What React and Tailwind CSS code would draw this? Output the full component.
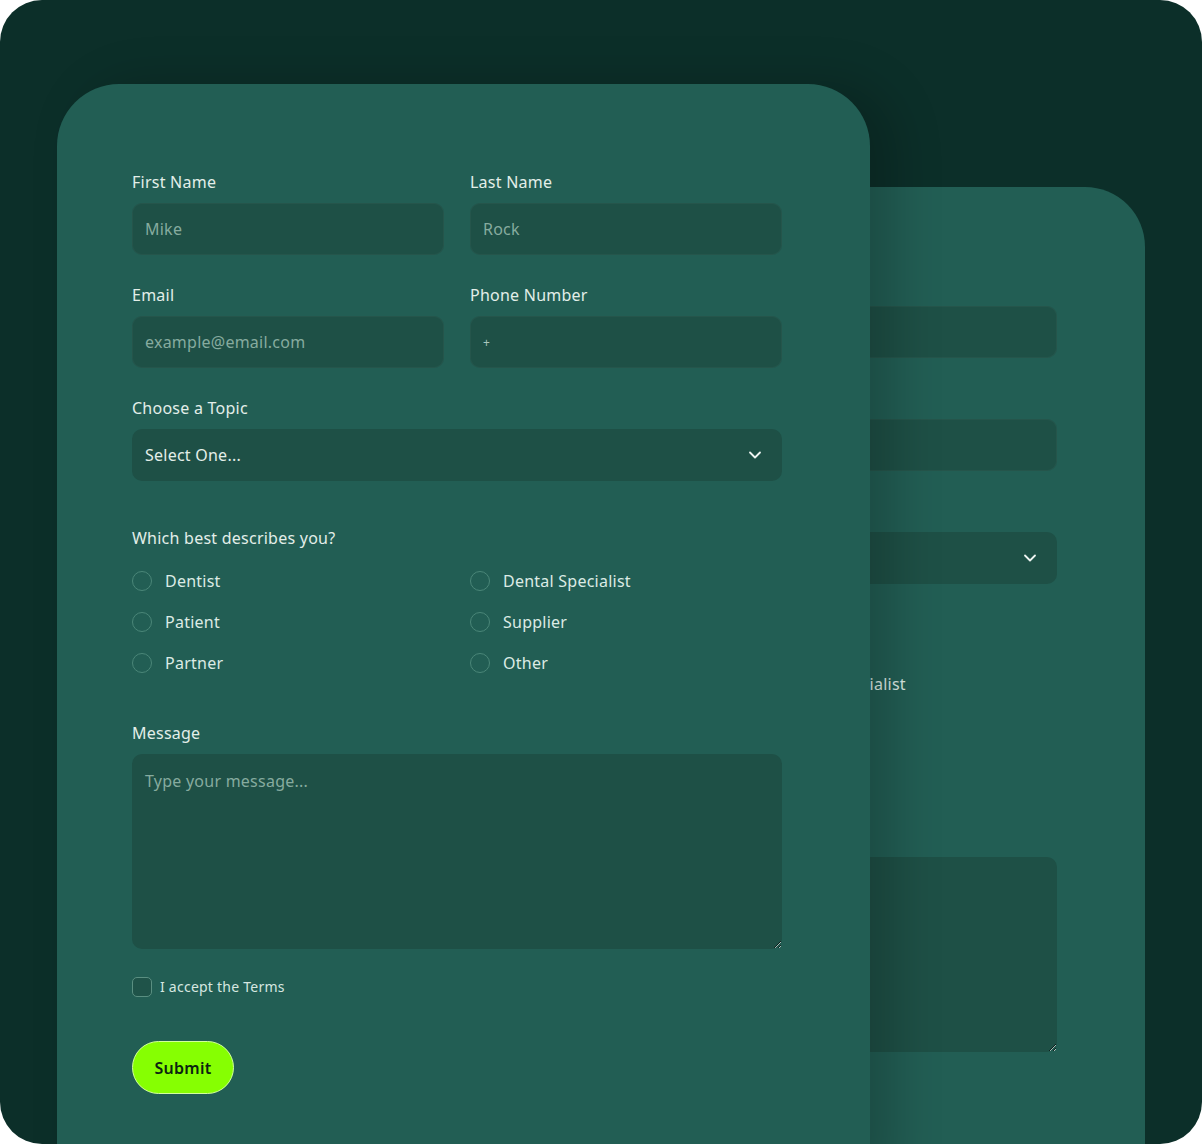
import { ChevronDown } from 'lucide-react'

const roles = ['Dentist', 'Dental Specialist', 'Patient', 'Supplier', 'Partner', 'Other']

function Field({ label, placeholder, small }) {
  return (
    <div className="flex flex-col gap-[9px]">
      <label className="text-base leading-6 text-[#e3eee9]">{label}</label>
      <input
        placeholder={placeholder}
        className={`h-[52px] w-full rounded-[10px] bg-[#1e5046] px-[13px] text-[#e3eee9] outline-none shadow-[inset_0_0_0_1px_rgba(255,255,255,0.03)] ${small ? 'text-xs placeholder:text-[#a9c7bd]' : 'text-base placeholder:text-[#86ab9f]'}`}
      />
    </div>
  )
}

function ContactForm() {
  return (
    <form className="flex w-[650px] flex-col tracking-[0.015em]" onSubmit={(e) => e.preventDefault()}>
      <div className="grid grid-cols-2 gap-x-[26px] gap-y-[28px]">
        <Field label="First Name" placeholder="Mike" />
        <Field label="Last Name" placeholder="Rock" />
        <Field label="Email" placeholder="example@email.com" />
        <Field label="Phone Number" placeholder="+" small />
      </div>

      <div className="mt-[28px] flex flex-col gap-[9px]">
        <label className="text-base leading-6 text-[#e3eee9]">Choose a Topic</label>
        <button
          type="button"
          className="flex h-[52px] w-full items-center justify-between rounded-[10px] bg-[#1e5046] pl-[13px] pr-[17px] text-base text-[#e3eee9]"
        >
          <span>Select One...</span>
          <ChevronDown className="h-5 w-5 text-[#eef5f2]" strokeWidth={2.2} />
        </button>
      </div>

      <p className="mt-[45px] text-base leading-6 text-[#e3eee9]">Which best describes you?</p>
      <div className="mt-[21px] grid grid-cols-2 gap-x-[26px] gap-y-[21px]">
        {roles.map((r) => (
          <label key={r} className="flex h-5 items-center gap-[13px] text-base text-[#dcebe5]">
            <span className="h-5 w-5 shrink-0 rounded-full border border-[#4a8678]" />
            {r}
          </label>
        ))}
      </div>

      <div className="mt-[48px] flex flex-col gap-[9px]">
        <label className="text-base leading-6 text-[#e3eee9]">Message</label>
        <textarea
          placeholder="Type your message..."
          className="h-[195px] w-full rounded-[10px] bg-[#1e5046] px-[13px] py-[15px] text-base text-[#e3eee9] outline-none placeholder:text-[#86ab9f]"
        />
      </div>

      <label className="mt-[28px] flex items-center gap-2 text-sm text-[#d6e7e0]">
        <span className="h-5 w-5 rounded-[5px] border border-[#5a8f81] bg-[#1f5349]" />
        I accept the Terms
      </label>

      <button
        type="submit"
        className="mt-[44px] h-[53px] w-[102px] rounded-full border border-[#d2ff9c] bg-[#86ff02] text-base font-semibold text-[#0b2410]"
      >
        Submit
      </button>
    </form>
  )
}

export default function App() {
  return (
    <div className="min-h-screen bg-white font-['Noto_Sans',sans-serif]">
      <div className="relative h-[1144px] overflow-hidden rounded-[42px] bg-[#0c2f29] pl-[57px] pt-[84px]">
        {/* back card: same form, peeking out behind the front one */}
        <div
          aria-hidden="true"
          className="pointer-events-none absolute left-[332px] top-[187px] h-[1100px] w-[813px] rounded-t-[60px] bg-[#225e54] pl-[75px] pt-[86px]"
        >
          <ContactForm />
        </div>
        <div className="relative h-[1100px] w-[813px] rounded-t-[62px] bg-[#225e54] pl-[75px] pt-[86px] shadow-[24px_0_50px_rgba(0,0,0,0.2)]">
          <ContactForm />
        </div>
      </div>
    </div>
  )
}
